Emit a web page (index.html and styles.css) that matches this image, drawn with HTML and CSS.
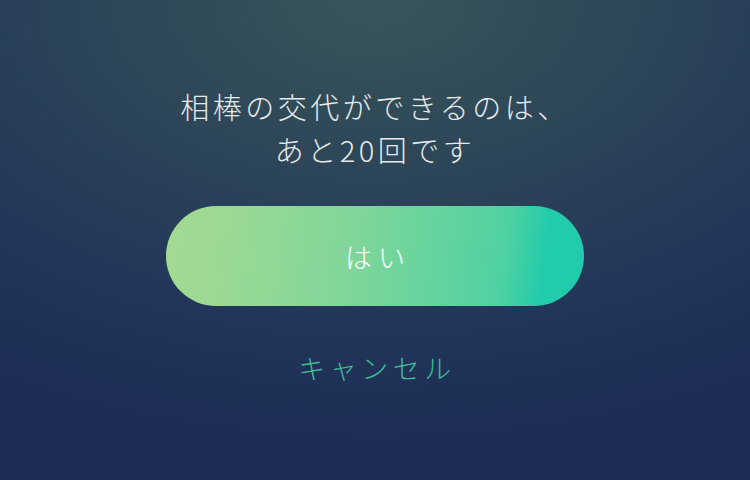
FILE: index.html
```html
<!DOCTYPE html>
<html lang="ja">
<head>
<meta charset="utf-8">
<title>相棒の交代</title>
<link rel="stylesheet" href="styles.css">
</head>
<body>
  <main class="dialog">
    <p class="message">相棒の交代ができるのは、<br>あと20回です</p>
    <button class="btn-confirm" type="button">はい</button>
    <button class="btn-cancel" type="button">キャンセル</button>
  </main>
</body>
</html>
```

FILE: styles.css
```css
html, body {
  margin: 0;
  padding: 0;
}

body {
  width: 750px;
  height: 480px;
  overflow: hidden;
  font-family: "Noto Sans CJK JP", "Noto Sans", sans-serif;
  background-color: #1d2d55;
  background-image: radial-gradient(ellipse 720px 440px at 50% 0, #38565a 0%, #2c4458 42%, #22355a 75%, #1d2d55 100%);
}

.dialog {
  display: flex;
  flex-direction: column;
  align-items: center;
  padding-top: 85px;
}

.message {
  margin: 0;
  font-size: 29px;
  font-weight: 300;
  line-height: 43px;
  color: #e6eaea;
  text-align: center;
  letter-spacing: 3.5px;
}

.btn-confirm {
  margin-top: 35px;
  width: 418px;
  height: 100px;
  border: none;
  border-radius: 50px;
  background: linear-gradient(97deg, #a3da93 0%, #9bd993 15%, #7fd69a 45%, #4fd1a2 80%, #21cbab 90%, #21cbab 100%);
  color: #ffffff;
  font-family: inherit;
  font-size: 27px;
  font-weight: 300;
  letter-spacing: 6px;
  padding: 0 0 0 6px;
}

.btn-cancel {
  margin-top: 42px;
  border: none;
  background: none;
  color: #3dbd93;
  font-family: inherit;
  font-size: 27px;
  font-weight: 300;
  letter-spacing: 4.5px;
  padding: 0 0 0 4px;
}
```
